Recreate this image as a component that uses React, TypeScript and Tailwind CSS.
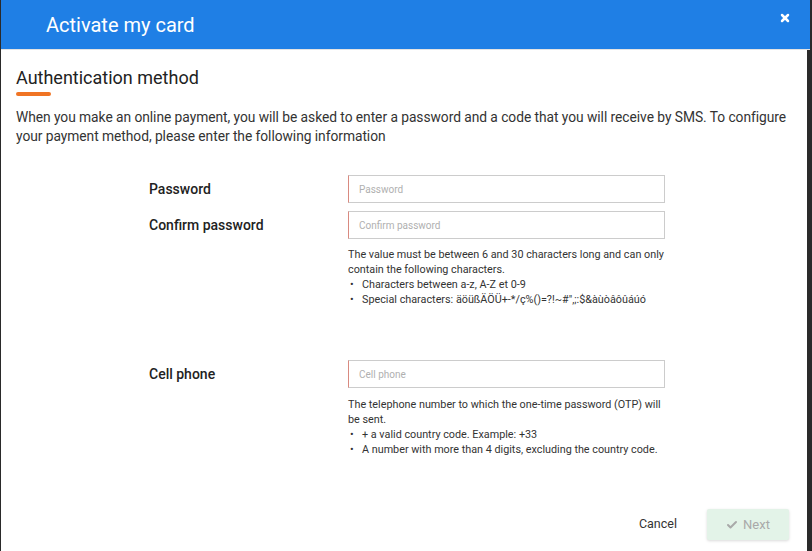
import React from "react";
import { Check, X } from "lucide-react";

const font = { fontFamily: "Roboto, 'Liberation Sans', sans-serif" };

function Field({ label, placeholder, type = "text" }: { label: string; placeholder: string; type?: string }) {
  return (
    <div className="flex items-center">
      <label className="w-[199px] text-[14px] font-medium text-[#222]">{label}</label>
      <input
        type={type}
        placeholder={placeholder}
        className="w-[317px] h-[28px] border border-[#cccccc] border-l-[#d98a80] px-[10px] text-[10px] text-[#333] placeholder:text-[#b0b0b0] outline-none"
      />
    </div>
  );
}

function Help({ intro, items }: { intro: string; items: string[] }) {
  return (
    <div className="ml-[199px] w-[318px] text-[10.8px] leading-[15px] text-[#333]">
      <p>{intro}</p>
      <ul>
        {items.map((it) => (
          <li key={it} className="flex">
            <span className="w-[14px] pl-[2px]">•</span>
            <span>{it}</span>
          </li>
        ))}
      </ul>
    </div>
  );
}

export default function App() {
  return (
    <div className="w-[812px] h-[551px] bg-[#2a2a2a] overflow-hidden" style={font}>
      <div className="ml-[1px] w-[806px] h-[551px] bg-white flex flex-col">
        <div className="h-[50px] bg-[#1f7fe5] border-b border-[#e3e3e3] flex items-start justify-between mr-[-3px]">
          <h1 className="ml-[45px] mt-[11px] text-[20px] leading-[28px] text-white">Activate my card</h1>
          <button className="mr-[19px] mt-[12px] text-white">
            <X size={12} strokeWidth={5} />
          </button>
        </div>

        <div className="px-[15px]">
          <h2 className="mt-[16px] text-[18px] leading-[24px] text-[#222]">Authentication method</h2>
          <div className="mt-[2px] w-[35px] h-[4px] rounded-full bg-[#f07424]" />
          <p className="mt-[12px] mr-[-8px] text-[13.8px] tracking-[-0.05px] leading-[19px] text-[#333]">
            When you make an online payment, you will be asked to enter a password and a code that you will receive by SMS. To configure your payment method, please enter the following information
          </p>

          <div className="mt-[29px] ml-[133px] flex flex-col">
            <Field label="Password" placeholder="Password" type="password" />
            <div className="mt-[8px]">
              <Field label="Confirm password" placeholder="Confirm password" type="password" />
            </div>
            <div className="mt-[8px]">
              <Help
                intro="The value must be between 6 and 30 characters long and can only contain the following characters."
                items={["Characters between a-z, A-Z et 0-9", "Special characters: äöüßÄÖÜ+-*/ç%()=?!~#\",;:$&àùòâôûáúó"]}
              />
            </div>
            <div className="mt-[53px]">
              <Field label="Cell phone" placeholder="Cell phone" type="tel" />
            </div>
            <div className="mt-[9px]">
              <Help
                intro="The telephone number to which the one-time password (OTP) will be sent."
                items={["+ a valid country code. Example: +33", "A number with more than 4 digits, excluding the country code."]}
              />
            </div>
          </div>
        </div>

        <div className="mt-auto mb-[11px] mr-[18px] flex items-center justify-end">
          <button className="mr-[30px] text-[12.5px] text-[#333]">Cancel</button>
          <button className="w-[82px] h-[31px] bg-[#e3f3e8] rounded-[2px] shadow-[0_1px_3px_rgba(0,0,0,0.15)] flex items-center justify-center gap-[5px] text-[13px] text-[#a9a9a9]">
            <Check size={12} strokeWidth={4} />
            Next
          </button>
        </div>
      </div>
    </div>
  );
}
